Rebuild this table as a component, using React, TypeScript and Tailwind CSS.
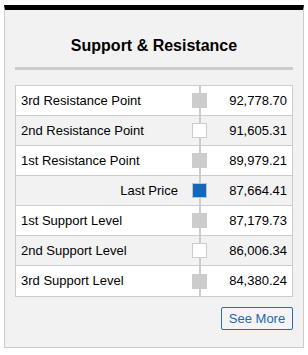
import React from "react";

type Row = { label: string; value: string; kind: "gray" | "white" | "blue"; right?: boolean };

const rows: Row[] = [
  { label: "3rd Resistance Point", value: "92,778.70", kind: "gray" },
  { label: "2nd Resistance Point", value: "91,605.31", kind: "white" },
  { label: "1st Resistance Point", value: "89,979.21", kind: "gray" },
  { label: "Last Price", value: "87,664.41", kind: "blue", right: true },
  { label: "1st Support Level", value: "87,179.73", kind: "gray" },
  { label: "2nd Support Level", value: "86,006.34", kind: "white" },
  { label: "3rd Support Level", value: "84,380.24", kind: "gray" },
];

export default function App() {
  return (
    <div
      className="w-[308px] h-[355px] bg-white pt-[5px] pl-[4px]"
      style={{ fontFamily: '"Liberation Sans", Arial, sans-serif' }}
    >
      <div className="w-[300px] h-[343px] border-t-[5px] border-t-black border-x border-b border-x-[#cccccc] border-b-[#cccccc] bg-[#f2f2f2] flex flex-col">
        <div className="pt-[26px] h-[46px] text-center text-[16px] leading-[20px] font-bold text-black">
          Support &amp; Resistance
        </div>
        <div className="mt-[11px] mx-[10px] h-[3px] bg-[#cccccc]" />
        <div className="mt-[15px] mx-[10px] border border-[#cccccc] bg-white">
          {rows.map((r, i) => (
            <div
              key={i}
              className={
                "flex h-[30px] text-[13px] text-black " +
                (i < rows.length - 1 ? "border-b border-[#cccccc] " : "h-[29px] ") +
                (i % 2 === 1 ? "bg-[#f2f2f2]" : "bg-white")
              }
            >
              <div
                className={
                  "w-[168px] flex items-center " +
                  (r.right ? "justify-end pr-[6px]" : "pl-[5px]")
                }
              >
                {r.label}
              </div>
              <div className="relative w-[31px] flex items-center justify-center">
                <div className="absolute left-[15px] top-0 bottom-[-1px] w-[2px] bg-[#cccccc]" />
                <div
                  className={
                    "relative w-[15px] h-[15px] " +
                    (r.kind === "gray"
                      ? "bg-[#cccccc]"
                      : r.kind === "white"
                      ? "bg-white border border-[#cccccc]"
                      : "bg-[#1565b9] border border-[#c4c4c4]")
                  }
                />
              </div>
              <div className="flex-1 flex items-center justify-end pr-[5px]">{r.value}</div>
            </div>
          ))}
        </div>
        <div className="mt-[10px] mx-[10px] flex justify-end">
          <button className="w-[72px] h-[23px] border border-[#2a6db5] rounded-[2px] text-[13px] text-[#1f67b7] bg-[#f4f4f4] flex items-center justify-center">
            See More
          </button>
        </div>
      </div>
    </div>
  );
}
